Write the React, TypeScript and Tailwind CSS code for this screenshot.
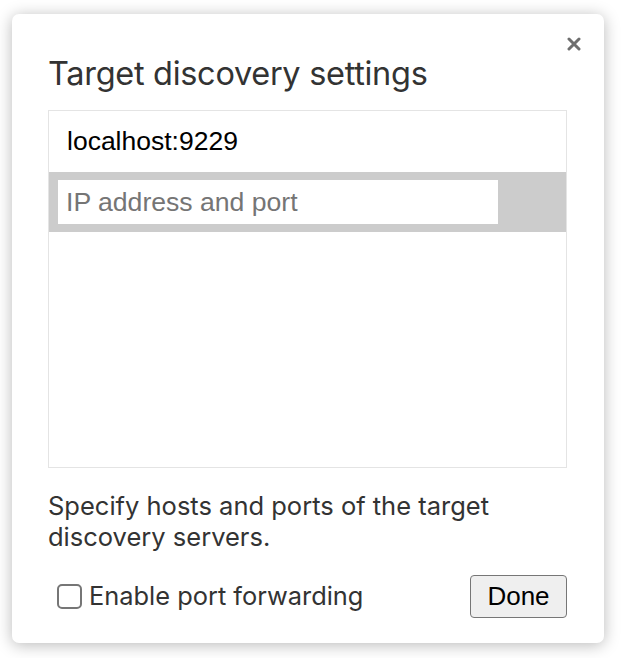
export default function App() {
  return (
    <div className="min-h-screen bg-white pt-[14px] pl-[12px]">
      <div className="relative flex h-[629px] w-[592px] flex-col rounded-[7px] bg-white pl-[36px] pr-[37px] shadow-[0_2px_16px_rgba(0,0,0,0.28)]">
        {/* Close */}
        <button className="absolute right-[22px] top-[22px] flex h-[16px] w-[16px] items-center justify-center">
          <svg width="14" height="14" viewBox="0 0 14 14">
            <path d="M2 2 L12 12 M12 2 L2 12" stroke="#6e6e6e" strokeWidth="3" strokeLinecap="round" />
          </svg>
        </button>

        <h1 className="mt-[40px] font-['Inter',sans-serif] text-[32.5px] leading-[40px] text-[#333333] tracking-[-0.3px]">
          Target discovery settings
        </h1>

        {/* Host list */}
        <div className="mt-[16px] flex h-[358px] flex-col border border-[#e4e4e4]">
          <div className="flex h-[61px] items-center pl-[18px] font-['Liberation_Sans',Arial,sans-serif] text-[26.5px] text-black">
            localhost:9229
          </div>
          <div className="flex h-[60px] items-center bg-[#cccccc] pl-[9px]">
            <input
              className="h-[44px] w-[440px] bg-white px-[8px] font-['Liberation_Sans',Arial,sans-serif] text-[26.6px] text-black outline-none placeholder:text-[#757575]"
              placeholder="IP address and port"
            />
          </div>
        </div>

        <p className="mt-[22px] font-['Inter',sans-serif] text-[25.5px] leading-[31px] text-[#333333]">
          Specify hosts and ports of the target discovery servers.
        </p>

        <div className="mt-[23px] flex items-center justify-between">
          <label className="flex items-center gap-[7px] pl-[9px] font-['Inter',sans-serif] text-[25.4px] text-[#333333]">
            <span className="h-[25px] w-[25px] rounded-[5px] border-2 border-[#767676] bg-white" />
            Enable port forwarding
          </label>
          <button className="flex h-[43px] w-[97px] items-center justify-center rounded-[4px] border-[1.5px] border-[#767676] bg-[#efefef] font-['Liberation_Sans',Arial,sans-serif] text-[26px] text-black">
            Done
          </button>
        </div>
      </div>
    </div>
  );
}
